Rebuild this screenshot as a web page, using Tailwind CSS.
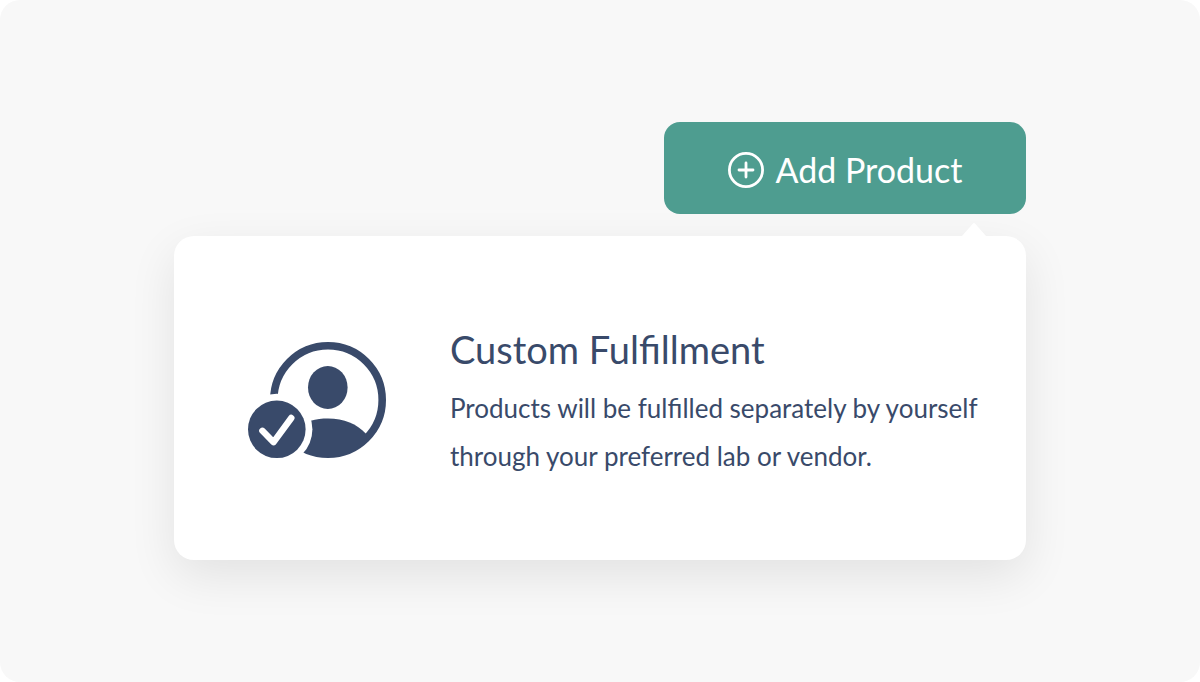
<!DOCTYPE html>
<html lang="en">
  <head>
    <meta charset="UTF-8" />
    <meta name="viewport" content="width=device-width, initial-scale=1.0" />
    <title>Add Product</title>
    <script src="https://cdn.jsdelivr.net/npm/@tailwindcss/browser@4"></script>
  </head>
  <body class="bg-white font-['Gill_Sans','Lato',sans-serif] text-[#394a6a]">
    <main
      class="flex min-h-screen flex-col items-center justify-center rounded-[20px] bg-[#f8f8f8] px-6"
    >
      <div class="flex w-full max-w-[852px] flex-col items-end gap-[22px]">
        <button
          type="button"
          class="flex h-[92px] w-full max-w-[362px] items-center justify-center gap-3 rounded-2xl bg-[#4e9d90] pt-[3px] text-[34px] leading-[48px] text-white"
        >
          <!-- Plus in a circle -->
          <svg
            class="size-9 shrink-0"
            viewBox="0 0 36 36"
            fill="none"
            stroke="currentColor"
            stroke-width="2.8"
            stroke-linecap="round"
            aria-hidden="true"
          >
            <circle cx="18" cy="18" r="16.6" />
            <path d="M18 11v14M11 18h14" />
          </svg>
          <span>Add Product</span>
        </button>

        <!-- Popover -->
        <section
          class="relative flex min-h-[324px] w-full items-center gap-16 rounded-[20px] bg-white pt-[52px] pr-12 pb-12 pl-[74px] shadow-[0_16px_48px_rgba(0,0,0,0.09)]"
        >
          <!-- Arrow -->
          <svg
            class="absolute right-10 bottom-full h-[13px] w-6"
            viewBox="0 0 24 13"
            fill="white"
            aria-hidden="true"
          >
            <path d="M0 13 10.8.8Q12-.6 13.2.8L24 13Z" />
          </svg>

          <svg
            class="h-[117px] w-[138px] shrink-0"
            viewBox="0 0 138 117"
            fill="none"
            aria-hidden="true"
          >
            <circle cx="80" cy="58" r="54.2" stroke="#394a6a" stroke-width="7.6" />
            <ellipse cx="79.8" cy="45.5" rx="19.8" ry="21.5" fill="#394a6a" />
            <path
              d="M46 86C57 79 68 76.5 80 76.5 96 76.5 109 82 117.7 91.5L119 99A57 57 0 0 1 45 103Z"
              fill="#394a6a"
            />
            <!-- Check badge -->
            <circle cx="28.8" cy="87.3" r="35.6" fill="white" />
            <circle cx="28.8" cy="87.3" r="28.8" fill="#394a6a" />
            <path
              d="M14.4 88.8 25.6 100.2 43.3 76"
              stroke="white"
              stroke-width="6.4"
              stroke-linecap="round"
              stroke-linejoin="round"
            />
          </svg>

          <div class="pt-1">
            <h2 class="text-[38px] leading-[48px]">Custom Fulfillment</h2>
            <p class="mt-[11px] text-[26px] leading-[48px]">
              Products will be fulfilled separately by yourself<br />
              through your preferred lab or vendor.
            </p>
          </div>
        </section>
      </div>
    </main>
  </body>
</html>
